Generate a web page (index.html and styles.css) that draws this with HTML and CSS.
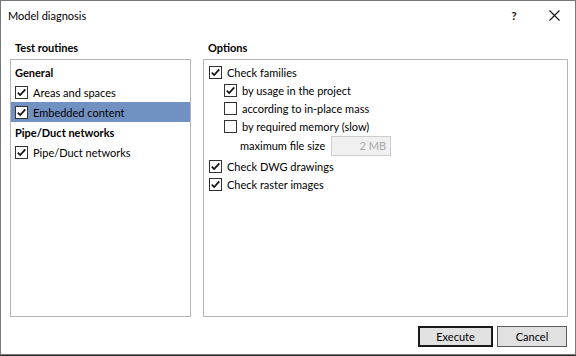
FILE: index.html
```html
<!DOCTYPE html>
<html>
<head>
    <title>Model diagnosis</title>
    <link rel="stylesheet" href="styles.css">
</head>
<body>
    <div class="dialog">
        <div class="titlebar">
            <div class="title">Model diagnosis</div>
            <div class="title-btn help">?</div>
            <div class="title-btn close">
                <svg width="11" height="11" viewBox="0 0 11 11"><path d="M0.5 0.5L10.5 10.5M10.5 0.5L0.5 10.5" stroke="#111" stroke-width="1.1" fill="none"/></svg>
            </div>
        </div>

        <div class="content">
            <div class="columns">
                <div class="column left">
                    <div class="heading">Test routines</div>
                    <div class="box list">
                        <div class="row group">General</div>
                        <div class="row"><span class="check on"></span>Areas and spaces</div>
                        <div class="row selected"><span class="check on"></span>Embedded content</div>
                        <div class="row group">Pipe/Duct networks</div>
                        <div class="row"><span class="check on"></span>Pipe/Duct networks</div>
                    </div>
                </div>
                <div class="column right">
                    <div class="heading">Options</div>
                    <div class="box options">
                        <div class="opt"><span class="check on"></span>Check families</div>
                        <div class="opt sub"><span class="check on"></span>by usage in the project</div>
                        <div class="opt sub"><span class="check"></span>according to in-place mass</div>
                        <div class="opt sub"><span class="check"></span>by required memory (slow)</div>
                        <div class="opt size">
                            <span class="size-label">maximum file size</span>
                            <span class="size-input">2 MB</span>
                        </div>
                        <div class="opt"><span class="check on"></span>Check DWG drawings</div>
                        <div class="opt"><span class="check on"></span>Check raster images</div>
                    </div>
                </div>
            </div>

            <div class="footer">
                <div class="button default">Execute</div>
                <div class="button">Cancel</div>
            </div>
        </div>
    </div>
</body>
</html>
```

FILE: styles.css
```css
body {
    margin: 0;
    padding: 0;
    width: 576px;
    height: 356px;
    background: #2e2e2e;
    font-family: Lato, "Liberation Sans", sans-serif;
    font-size: 11px;
    color: #000;
    overflow: hidden;
}
.dialog {
    width: 576px;
    height: 355px;
    box-sizing: border-box;
    background: #fff;
    border: 1px solid #777;
    display: flex;
    flex-direction: column;
}
.titlebar {
    height: 30px;
    display: flex;
    align-items: center;
}
.title {
    flex: 1;
    padding-left: 7px;
    padding-bottom: 1px;
}
.title-btn {
    height: 30px;
    display: flex;
    align-items: center;
    justify-content: center;
}
.help {
    width: 40px;
    font-size: 12px;
    font-weight: bold;
    color: #222;
    padding: 0 0 2px 2px;
    box-sizing: border-box;
}
.close {
    width: 42px;
    padding-bottom: 1px;
    box-sizing: border-box;
}
.content {
    flex: 1;
    display: flex;
    flex-direction: column;
    padding: 9px 7px 0 9px;
}
.columns {
    display: flex;
    gap: 12px;
}
.left {
    width: 181px;
}
.right {
    flex: 1;
}
.heading {
    font-weight: bold;
    height: 16px;
    line-height: 16px;
    padding-left: 5px;
    margin-bottom: 3px;
}
.box {
    height: 258px;
    box-sizing: border-box;
    border: 1px solid #b4b4b4;
}
.list {
    padding-top: 2px;
}
.row {
    height: 20px;
    display: flex;
    align-items: center;
    padding-left: 4px;
}
.row.group {
    font-weight: bold;
}
.row.selected {
    background: #7191c2;
}
.check {
    width: 13px;
    height: 13px;
    box-sizing: border-box;
    border: 1px solid #333;
    background: #fff;
    margin-right: 5px;
    flex-shrink: 0;
}
.check.on {
    background: #fff url("data:image/svg+xml,%3Csvg xmlns='http://www.w3.org/2000/svg' width='11' height='11' viewBox='0 0 11 11'%3E%3Cpath d='M1.8 5.6L4.2 8.1L9.3 2.4' stroke='%23111' stroke-width='1.7' fill='none'/%3E%3C/svg%3E") no-repeat center;
}
.options {
    padding-top: 3px;
}
.opt {
    height: 18px;
    display: flex;
    align-items: center;
    padding-left: 5px;
}
.opt.sub {
    padding-left: 20px;
}
.opt.size {
    height: 21px;
    padding-left: 36px;
    margin-bottom: 1px;
}
.size-label {
    width: 91px;
    flex-shrink: 0;
    white-space: nowrap;
}
.size-input {
    width: 60px;
    height: 20px;
    flex-shrink: 0;
    box-sizing: border-box;
    border: 1px solid #cdcdcd;
    background: #f0f0f0;
    color: #a8a8a8;
    text-align: right;
    line-height: 18px;
    padding-right: 4px;
}
.footer {
    display: flex;
    justify-content: flex-end;
    gap: 4px;
    margin-top: 9px;
    padding-right: 1px;
}
.button {
    width: 70px;
    height: 21px;
    box-sizing: border-box;
    border: 1px solid #5a5a5a;
    background: #e1e1e1;
    display: flex;
    align-items: center;
    justify-content: center;
}
.button.default {
    width: 75px;
    border: 2px solid #1a1a1a;
}
```
